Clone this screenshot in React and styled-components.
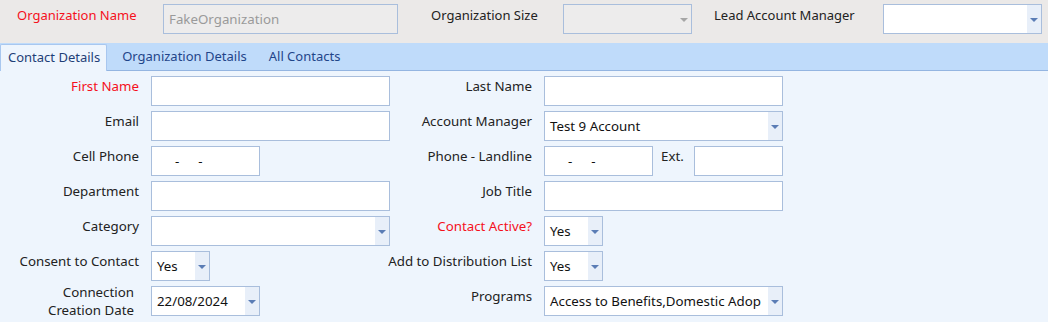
import React from 'react'
import styled, { createGlobalStyle } from 'styled-components'

const GlobalStyle = createGlobalStyle`
  body {
    margin: 0;
    background: #eef5fd;
    font-family: 'Noto Sans', 'Open Sans', sans-serif;
    font-size: 13.3px;
    color: #222;
  }
`

const Dropdown = ({ value, width, disabled }) => (
  <SelectBox width={width} disabled={disabled}>
    <SelectValue>{value}</SelectValue>
    <ArrowButton disabled={disabled}>
      <Arrow disabled={disabled} />
    </ArrowButton>
  </SelectBox>
)

const PhoneBox = () => (
  <TextBox width={109}>
    <Mask>-</Mask>
    <Mask>-</Mask>
  </TextBox>
)

const App = () => {
  return (
    <Page>
      <GlobalStyle />
      <TopBar>
        <TopLabel required left={17} width={146}>Organization Name</TopLabel>
        <TextBox width={235} disabled>FakeOrganization</TextBox>
        <TopLabel left={33} width={132}>Organization Size</TopLabel>
        <Dropdown width={129} disabled />
        <TopLabel left={22} width={169}>Lead Account Manager</TopLabel>
        <Dropdown width={159} />
      </TopBar>

      <TabBar>
        <Tab active>Contact Details</Tab>
        <Tab>Organization Details</Tab>
        <Tab>All Contacts</Tab>
      </TabBar>

      <Form>
        <Label required>First Name</Label>
        <TextBox width={239} />
        <Label>Last Name</Label>
        <TextBox width={239} />

        <Label>Email</Label>
        <TextBox width={239} />
        <Label>Account Manager</Label>
        <Dropdown width={239} value="Test 9 Account" />

        <Label>Cell Phone</Label>
        <PhoneBox />
        <Label>Phone - Landline</Label>
        <Inline>
          <PhoneBox />
          <ExtLabel>Ext.</ExtLabel>
          <TextBox width={89} />
        </Inline>

        <Label>Department</Label>
        <TextBox width={239} />
        <Label>Job Title</Label>
        <TextBox width={239} />

        <Label>Category</Label>
        <Dropdown width={239} />
        <Label required>Contact Active?</Label>
        <Dropdown width={59} value="Yes" />

        <Label>Consent to Contact</Label>
        <Dropdown width={59} value="Yes" />
        <Label>Add to Distribution List</Label>
        <Dropdown width={59} value="Yes" />

        <TwoLineLabel>
          Connection
          <br />
          Creation Date
        </TwoLineLabel>
        <Dropdown width={109} value="22/08/2024" />
        <Label>Programs</Label>
        <Dropdown width={239} value="Access to Benefits,Domestic Adop" />
      </Form>
    </Page>
  )
}

const Page = styled.div`
  width: 1048px;
  height: 322px;
  overflow: hidden;
  background: #eef5fd;
`

const TopBar = styled.div`
  display: flex;
  align-items: flex-start;
  height: 43px;
  padding-top: 4px;
  box-sizing: border-box;
  background: #ebe9e8;
`

const TopLabel = styled.div`
  flex: none;
  width: ${(p) => p.width}px;
  margin-left: ${(p) => p.left}px;
  padding-top: 2px;
  line-height: 18px;
  font-size: 13px;
  color: ${(p) => (p.required ? '#f5101c' : '#222')};
`

const TabBar = styled.div`
  display: flex;
  align-items: flex-end;
  height: 28px;
  box-sizing: border-box;
  background: #bfdbfa;
  border-bottom: 1px solid #94b5e1;
`

const Tab = styled.div`
  height: ${(p) => (p.active ? '27px' : '26px')};
  margin-bottom: ${(p) => (p.active ? '-1px' : '0')};
  margin-right: ${(p) => (p.active ? '4px' : '0')};
  padding: ${(p) => (p.active ? '0 6px 0 7px' : '0 11px')};
  box-sizing: border-box;
  font-size: 13px;
  line-height: 25px;
  white-space: nowrap;
  color: ${(p) => (p.active ? '#1f3f78' : '#1f4589')};
  background: ${(p) => (p.active ? '#eef5fd' : 'transparent')};
  border: ${(p) => (p.active ? '1px solid #a8c7ef' : 'none')};
  border-bottom: none;
  border-radius: 2px 2px 0 0;
`

const Form = styled.div`
  display: grid;
  grid-template-columns: 139px 239px 130px 239px;
  grid-auto-rows: 30px;
  column-gap: 12px;
  row-gap: 5px;
  padding-top: 5px;
`

const Label = styled.div`
  display: flex;
  justify-content: flex-end;
  text-align: right;
  padding-top: 1px;
  line-height: 18px;
  white-space: nowrap;
  color: ${(p) => (p.required ? '#f5101c' : '#222')};
`

const TwoLineLabel = styled(Label)`
  display: block;
  padding: 0 5px 0 0;
  margin-top: -3px;
`

const TextBox = styled.div`
  flex: none;
  display: flex;
  align-items: center;
  width: ${(p) => p.width}px;
  height: 30px;
  box-sizing: border-box;
  padding-left: 5px;
  border: 1px solid #a9bedc;
  background: ${(p) => (p.disabled ? '#edecec' : '#fff')};
  color: ${(p) => (p.disabled ? '#9a9a9a' : '#111')};
`

const Mask = styled.span`
  margin-left: 19px;
  &:first-child {
    margin-left: 18px;
  }
`

const Inline = styled.div`
  display: flex;
  align-items: flex-start;
`

const ExtLabel = styled.div`
  width: 41px;
  padding: 1px 0 0 8px;
  box-sizing: border-box;
  line-height: 18px;
`

const SelectBox = styled.div`
  flex: none;
  display: flex;
  width: ${(p) => p.width}px;
  height: 30px;
  box-sizing: border-box;
  border: 1px solid #a9bedc;
  background: ${(p) => (p.disabled ? '#edecec' : '#fff')};
`

const SelectValue = styled.div`
  flex: 1;
  min-width: 0;
  padding: 1px 0 0 5px;
  line-height: 26px;
  color: #111;
  white-space: nowrap;
  overflow: hidden;
`

const ArrowButton = styled.div`
  flex: none;
  width: 14px;
  display: flex;
  align-items: center;
  justify-content: center;
  background: ${(p) => (p.disabled ? '#edecec' : '#e8eff9')};
`

const Arrow = styled.div`
  width: 0;
  height: 0;
  margin-top: 2px;
  border-left: 4px solid transparent;
  border-right: 4px solid transparent;
  border-top: 4px solid ${(p) => (p.disabled ? '#a6a6a6' : '#5b7db5')};
`

export default App
